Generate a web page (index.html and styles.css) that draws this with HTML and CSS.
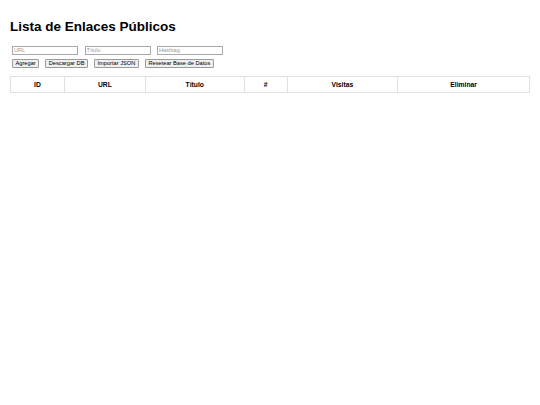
FILE: index.html
```html
<!DOCTYPE html>
<html lang="es">
<head>
    <meta charset="UTF-8">
    <meta name="viewport" content="width=device-width, initial-scale=1.0">
    <title>Lista de Enlaces Públicos</title>
    <link rel="stylesheet" href="styles.css">
</head>
<body>

<h1>Lista de Enlaces Públicos</h1>

<div class="form-row inputs">
    <input type="text" id="url" placeholder="URL">
    <input type="text" id="title" placeholder="Título">
    <input type="text" id="hashtag" placeholder="Hashtag">
</div>
<div class="form-row buttons">
    <button class="button">Agregar</button>
    <button class="button">Descargar DB</button>
    <button class="button">Importar JSON</button>
    <button class="button">Resetear Base de Datos</button>
</div>

<table class="links">
    <thead>
        <tr>
            <th class="col-id">ID</th>
            <th class="col-url">URL</th>
            <th class="col-title">Título</th>
            <th class="col-tag">#</th>
            <th class="col-visits">Visitas</th>
            <th class="col-delete">Eliminar</th>
        </tr>
    </thead>
    <tbody id="links"></tbody>
</table>

</body>
</html>
```

FILE: styles.css
```css
body {
    font-family: "Liberation Sans", Arial, sans-serif;
    margin: 0;
    padding: 10px;
    background: #fff;
    color: #000;
}
h1 {
    font-size: 13.5px;
    margin: 9px 0 12px;
}
.form-row {
    display: flex;
    align-items: center;
    padding-left: 2px;
}
.form-row.inputs {
    gap: 6.5px;
}
.form-row.buttons {
    gap: 6px;
    margin-top: 4.5px;
}
.form-row input {
    font-family: "Liberation Sans", Arial, sans-serif;
    font-size: 5.6px;
    line-height: 6px;
    height: 8.5px;
    width: 66px;
    box-sizing: border-box;
    padding: 0 1px;
    border: 1px solid #a9a9a9;
    margin: 0;
}
.form-row input::placeholder {
    color: #9a9a9a;
}
.button {
    font-family: "Liberation Sans", Arial, sans-serif;
    font-size: 5.7px;
    line-height: 7px;
    padding: 0 2.5px;
    background-color: #efefef;
    border: 1px solid #9a9a9a;
    border-radius: 1px;
    margin: 0;
    color: #000;
}
.links {
    width: 100%;
    border-collapse: collapse;
    margin-top: 7.5px;
}
.links th {
    border: 1px solid #e0e0e0;
    padding: 4px;
    font-size: 6.75px;
}
.col-id { width: 10.4%; }
.col-url { width: 15.6%; }
.col-title { width: 19%; }
.col-tag { width: 8.3%; }
.col-visits { width: 21.3%; }
.col-delete { width: 25.4%; }
```
